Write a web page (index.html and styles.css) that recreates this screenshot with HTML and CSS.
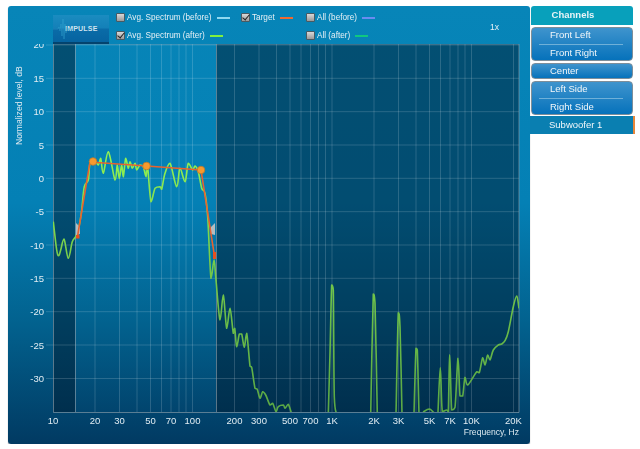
FILE: index.html
```html
<!DOCTYPE html>
<html lang="en">
<head>
    <meta charset="UTF-8">
    <title>Room correction</title>
    <link rel="stylesheet" href="styles.css">
</head>
<body>
    <div class="page">
        <div class="panel">
            <div class="toolbar">
                <button class="impulse">
                    <svg class="impulse-wave" viewBox="0 0 20 24"><path d="M0 13H5L6 11 7 15 8 8 9 20 10 3 11 23 12 8 13 17 14 11 15 15 16 12 17 14 20 13"/></svg>
                    IMPULSE
                </button>
                <div class="legend">
                    <div class="legend-item"><span class="check"></span>Avg. Spectrum (before)<span class="swatch swatch-before"></span></div>
                    <div class="legend-item"><span class="check on"></span>Target<span class="swatch swatch-target"></span></div>
                    <div class="legend-item"><span class="check"></span>All (before)<span class="swatch swatch-all-before"></span></div>
                    <div class="legend-item"><span class="check on"></span>Avg. Spectrum (after)<span class="swatch swatch-after"></span></div>
                    <div></div>
                    <div class="legend-item"><span class="check"></span>All (after)<span class="swatch swatch-all-after"></span></div>
                </div>
                <div class="zoom-level">1x</div>
            </div>

            <svg class="chart" viewBox="8 44 522 396" width="522" height="396">
                <defs>
                    <linearGradient id="greenLine" gradientUnits="userSpaceOnUse" x1="0" y1="150" x2="0" y2="412">
                        <stop offset="0" stop-color="#93f552"/>
                        <stop offset="0.45" stop-color="#74c94a"/>
                        <stop offset="1" stop-color="#5aa845"/>
                    </linearGradient>
                    <clipPath id="plotClip"><rect x="53" y="44" width="466" height="368"/></clipPath>
                </defs>

                <!-- excluded ranges -->
                <rect class="shade" x="53" y="44" width="22" height="368"/>
                <rect class="shade" x="216" y="44" width="303" height="368"/>

                <!-- grid -->
                <path class="grid" d="M46 45H519M46 78.3H519M46 111.7H519M46 145H519M46 178.3H519M46 211.7H519M46 245H519M46 278.3H519M46 311.7H519M46 345H519M46 378.5H519"/>
                <path class="grid" d="M95 44V412M119.5 44V412M137 44V412M150.5 44V412M161.5 44V412M171 44V412M179 44V412M186 44V412M192.5 44V412M234.5 44V412M259 44V412M276.5 44V412M290 44V412M301 44V412M310.5 44V412M318.5 44V412M325.5 44V412M332 44V412M374 44V412M398.5 44V412M416 44V412M429.5 44V412M440.5 44V412M450 44V412M458 44V412M465 44V412M471.5 44V412M513.5 44V412"/>
                <path class="frame" d="M53.5 44V412.5H519V44H53.5M75.5 44V412M216.5 44V412"/>

                <!-- y axis -->
                <text class="axis-y" x="44" y="48">20</text>
                <text class="axis-y" x="44" y="81.5">15</text>
                <text class="axis-y" x="44" y="115">10</text>
                <text class="axis-y" x="44" y="148.5">5</text>
                <text class="axis-y" x="44" y="181.5">0</text>
                <text class="axis-y" x="44" y="215">-5</text>
                <text class="axis-y" x="44" y="248.5">-10</text>
                <text class="axis-y" x="44" y="281.5">-15</text>
                <text class="axis-y" x="44" y="315">-20</text>
                <text class="axis-y" x="44" y="348.5">-25</text>
                <text class="axis-y" x="44" y="382">-30</text>
                <text class="axis-title" transform="translate(22 145) rotate(-90)">Normalized level, dB</text>

                <!-- x axis -->
                <text class="axis-x" x="53" y="424">10</text>
                <text class="axis-x" x="95" y="424">20</text>
                <text class="axis-x" x="119.5" y="424">30</text>
                <text class="axis-x" x="150.5" y="424">50</text>
                <text class="axis-x" x="171" y="424">70</text>
                <text class="axis-x" x="192.5" y="424">100</text>
                <text class="axis-x" x="234.5" y="424">200</text>
                <text class="axis-x" x="259" y="424">300</text>
                <text class="axis-x" x="290" y="424">500</text>
                <text class="axis-x" x="310.5" y="424">700</text>
                <text class="axis-x" x="332" y="424">1K</text>
                <text class="axis-x" x="374" y="424">2K</text>
                <text class="axis-x" x="398.5" y="424">3K</text>
                <text class="axis-x" x="429.5" y="424">5K</text>
                <text class="axis-x" x="450" y="424">7K</text>
                <text class="axis-x" x="471.5" y="424">10K</text>
                <text class="axis-x" x="513.5" y="424">20K</text>
                <text class="axis-title axis-freq" x="519" y="435">Frequency, Hz</text>

                <!-- measured curve, filled in by chart.js -->
                <g clip-path="url(#plotClip)">
                    <path class="curve" id="curve-after"/>
                </g>

                <!-- target curve and handles -->
                <polygon class="handle" points="76,223 80,227 80,234 76,235"/>
                <polygon class="handle" points="215,223 211,227 211,234 215,235"/>
                <path class="target" d="M77.5 236.5 90 162 146.5 166 201 170 214 253"/>
                <rect class="target-end" x="76" y="235" width="3.5" height="3.5"/>
                <rect class="target-end" x="213" y="252" width="3" height="7"/>
                <circle class="node" cx="93" cy="161.5" r="3.8"/>
                <circle class="node" cx="146.5" cy="166" r="3.8"/>
                <circle class="node" cx="201" cy="170" r="3.8"/>
            </svg>
        </div>

        <div class="sidebar">
            <div class="sidebar-title">Channels</div>
            <div class="group">
                <div class="channel">Front Left</div>
                <div class="channel">Front Right</div>
            </div>
            <div class="group">
                <div class="channel">Center</div>
            </div>
            <div class="group">
                <div class="channel">Left Side</div>
                <div class="channel">Right Side</div>
            </div>
            <div class="channel-selected">Subwoofer 1</div>
        </div>
    </div>
    <script src="chart.js"></script>
</body>
</html>
```

FILE: styles.css
```css
* {
    margin: 0;
    padding: 0;
    box-sizing: border-box;
    font-family: "Liberation Sans", Arial, sans-serif;
}

body {
    background: #fff;
    color: #fff;
}

.page {
    display: flex;
    align-items: flex-start;
    padding: 6px 0 0 8px;
    filter: blur(0.3px);
}

.panel {
    width: 522px;
    height: 438px;
    padding-top: 3px;
    border-radius: 3px;
    background: linear-gradient(#0785b8 0%, #0480b5 45%, #02628f 72%, #013a62 100%);
    box-shadow: 0 1px 1px rgba(0, 0, 0, 0.45);
}

.toolbar {
    display: flex;
    align-items: center;
    height: 35px;
    padding-left: 45px;
}

.impulse {
    position: relative;
    width: 56px;
    height: 29px;
    margin-top: 5px;
    padding-left: 12px;
    border: none;
    border-bottom: 2px solid #03436e;
    background: linear-gradient(#1a8cc0 0%, #1480b8 48%, #0a6ca8 52%, #0663a0 100%);
    color: #cfe4ef;
    font-size: 7px;
    font-weight: bold;
    letter-spacing: 0.2px;
    text-align: left;
}

.impulse-wave {
    position: absolute;
    left: 0;
    top: 1px;
    width: 20px;
    height: 24px;
}

.impulse-wave path {
    fill: none;
    stroke: #35a6d2;
    stroke-width: 0.6;
    stroke-opacity: 0.7;
}

.legend {
    display: grid;
    grid-template-columns: 125px 65px 130px;
    grid-auto-rows: 17px;
    row-gap: 1px;
    margin-left: 7px;
}

.legend-item {
    display: flex;
    align-items: center;
    font-size: 8.2px;
    color: #e6f0f5;
}

.check {
    position: relative;
    width: 9px;
    height: 9px;
    margin-right: 2px;
    border: 1px solid #4a5a62;
    border-radius: 1px;
    background: linear-gradient(#d8d8d8, #9a9a9a);
}

.check.on::after {
    content: "";
    position: absolute;
    left: 2px;
    top: -1px;
    width: 3px;
    height: 6px;
    border-right: 1.5px solid #222;
    border-bottom: 1.5px solid #222;
    transform: rotate(40deg);
}

.swatch {
    width: 13px;
    height: 2px;
    margin-left: 5px;
}

.swatch-before { background: #8fd8f0; }
.swatch-after { background: #7ff03f; }
.swatch-target { background: #f06a30; }
.swatch-all-before { background: #6a8cf0; }
.swatch-all-after { background: #10c880; }

.zoom-level {
    margin-left: auto;
    padding-right: 31px;
    font-size: 8.6px;
    color: #e6f0f5;
}

.chart {
    display: block;
}

.shade {
    fill: rgba(0, 25, 45, 0.5);
}

.grid {
    fill: none;
    stroke: rgba(255, 255, 255, 0.16);
    stroke-width: 1;
}

.frame {
    fill: none;
    stroke: rgba(150, 165, 175, 0.6);
    stroke-width: 1;
}

.axis-y,
.axis-x {
    font-size: 9.5px;
    fill: #e2edf3;
}

.axis-y {
    text-anchor: end;
}

.axis-x {
    text-anchor: middle;
}

.axis-title {
    font-size: 8.6px;
    fill: #dbe8ef;
}

.axis-freq {
    text-anchor: end;
}

.curve {
    fill: none;
    stroke: url(#greenLine);
    stroke-width: 1.6;
    stroke-linejoin: round;
}

.target {
    fill: none;
    stroke: #e8622f;
    stroke-width: 1.6;
}

.target-end {
    fill: #e8501f;
}

.handle {
    fill: #b4bcc0;
}

.node {
    fill: #f79a2e;
    stroke: #b9772c;
    stroke-width: 0.8;
}

.sidebar {
    display: flex;
    flex-direction: column;
    gap: 2px;
    width: 105px;
    padding-left: 1px;
}

.sidebar-title {
    width: 102px;
    height: 19px;
    padding-right: 18px;
    border-radius: 3px 3px 0 0;
    background: #08a0bb;
    font-size: 9.5px;
    font-weight: bold;
    line-height: 18px;
    text-align: center;
    color: #e8f4f7;
}

.group {
    width: 102px;
    border: 1px solid #7d8e9a;
    border-radius: 4px;
    background: linear-gradient(#3f94cd, #0672bb);
}

.channel {
    height: 14px;
    padding-left: 18px;
    font-size: 9.5px;
    line-height: 13px;
    color: #f2f7fa;
}

.channel + .channel {
    height: 18px;
    padding-top: 4px;
    background: linear-gradient(#6fb0d8, #6fb0d8) 7px 2px / 84px 1px no-repeat;
}

.channel-selected {
    width: 105px;
    height: 18px;
    margin: -1px 0 0 -1px;
    padding-left: 19px;
    border-right: 2px solid #e8863a;
    background: #0a7fb1;
    font-size: 9.5px;
    line-height: 18px;
    color: #f2f7fa;
}
```

FILE: chart.js
```js
// "after" spectrum, x/y in chart pixels. each array is one visible stretch of the curve
const stretches = [
    [53.3,221.7, 56.7,250, 58.7,255.7, 60.7,250, 64,239, 68.3,258.3, 72.3,241.7, 76,236, 79.3,225, 81.7,210, 84.3,186.7, 88.3,180, 90,163.3, 95,160.7, 98.3,165, 100.7,158.3, 103.3,173.3, 108.3,151.7, 115,180, 117.3,165, 119.3,178.3, 121.7,165, 123.3,176.7, 125.7,158.3, 128.3,168.3, 130,161.7, 132.3,168.3, 135,163.3, 136.7,170, 140,165, 143.3,166.7, 146,176.7, 147.3,163.3, 151,201.7, 155,188.3, 160,186.7, 161.7,189.3, 165,173.3, 170,163.3, 176.7,186.7, 180,168.3, 185,181.7, 188.3,163.3, 192.7,170, 195,166, 198.3,171.7, 201.7,188.3, 205,193.3, 207.7,216.7, 211,278.3, 214,260, 216,280, 220,320, 223.3,295, 226.7,328.3, 230,308.3, 233.3,333.3, 234.7,328.3, 236.7,346.7, 239.3,334, 241.7,334, 244.3,347.3, 246.7,333.3, 250,366, 251.7,367.3, 255,388.3, 257.3,389.3, 260,398.3, 262.7,391.7, 265.7,395, 270,405, 272.7,403.3, 276,411.7, 278.3,406.7, 283.3,405, 285,408.3, 288.3,404.3, 291.7,414],
    [328.3,414, 330,353, 331.7,285, 333.3,290, 334.3,396.7, 336.7,414],
    [370.7,414, 373.3,294, 375,303, 377.3,414],
    [396,414, 398.3,312.7, 400,326.7, 402,414],
    [414,414, 416,348.3, 417.3,350, 419,414],
    [423,412, 429.3,409, 435,414],
    [438,412, 440.3,367.7, 442.3,411.7, 446.7,410, 448.3,411.7, 449.7,355, 451.7,410, 455,407.3, 458,358.3, 460,396, 462.7,396, 465,377.3, 467.7,385, 476.7,371.7, 479.3,372.7, 482.7,357.7, 485,365, 487.7,355, 490,360, 493.3,350, 498.3,345, 501.7,344, 505,340.7, 508.3,331.7, 513.3,306.7, 516.7,296, 519,308.3]
];

const clamp = (v, a, b) => Math.min(Math.max(a, b), Math.max(Math.min(a, b), v));

// catmull-rom, control points kept inside the segment so peaks don't overshoot
function smooth(flat) {
    const pts = [];
    for (let i = 0; i < flat.length; i += 2) pts.push([flat[i], flat[i + 1]]);

    let d = `M${pts[0][0]} ${pts[0][1]}`;
    for (let i = 0; i < pts.length - 1; i++) {
        const p0 = pts[Math.max(i - 1, 0)];
        const p1 = pts[i];
        const p2 = pts[i + 1];
        const p3 = pts[Math.min(i + 2, pts.length - 1)];
        const c1x = p1[0] + (p2[0] - p0[0]) / 6;
        const c1y = clamp(p1[1] + (p2[1] - p0[1]) / 6, p1[1], p2[1]);
        const c2x = p2[0] - (p3[0] - p1[0]) / 6;
        const c2y = clamp(p2[1] - (p3[1] - p1[1]) / 6, p1[1], p2[1]);
        d += `C${c1x.toFixed(1)} ${c1y.toFixed(1)} ${c2x.toFixed(1)} ${c2y.toFixed(1)} ${p2[0]} ${p2[1]}`;
    }
    return d;
}

document.getElementById("curve-after").setAttribute("d", stretches.map(smooth).join(""));
```
